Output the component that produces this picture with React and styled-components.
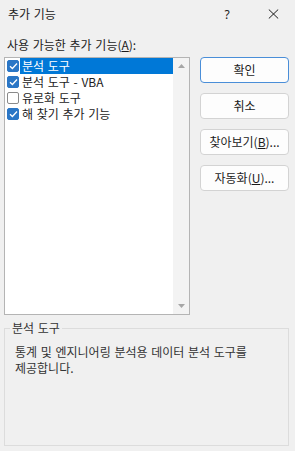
import React from 'react';
import styled, { createGlobalStyle } from 'styled-components';

const Global = createGlobalStyle`
  html, body { margin: 0; padding: 0; background: #f0f0f0; }
  body {
    font-family: "Noto Sans CJK KR", "Noto Sans", sans-serif;
    font-size: 12px;
    word-spacing: 1px;
    color: #1b1b1b;
  }
`;

const Window = styled.div`
  width: 295px;
  height: 451px;
  box-sizing: border-box;
  display: flex;
  flex-direction: column;
  background: #f0f0f0;
  overflow: hidden;
`;

const TitleBar = styled.div`
  height: 28px;
  flex: none;
  display: flex;
  align-items: center;
  padding: 0 7px 0 8px;
`;

const Title = styled.div`
  flex: 1;
  font-size: 12px;
  line-height: 16px;
  color: #1a1a1a;
`;

const TitleButton = styled.div`
  width: 30px;
  height: 20px;
  display: flex;
  align-items: center;
  justify-content: center;
  margin-left: ${p => p.$gap || 0}px;
  color: #1a1a1a;
  font-size: 12px;
  font-family: "Noto Sans", sans-serif;
`;

const Body = styled.div`
  flex: 1;
  display: flex;
  flex-direction: column;
  padding: 0 6px 5px 4px;
  min-height: 0;
`;

const FieldLabel = styled.div`
  margin: 9px 0 4px 3px;
  line-height: 16px;
  color: #1b1b1b;
`;

const MainRow = styled.div`
  display: flex;
  gap: 10px;
  align-items: flex-start;
`;

const ListBox = styled.div`
  width: 186px;
  height: 258px;
  box-sizing: border-box;
  border: 1px solid #b4b4b4;
  background: #ffffff;
  display: flex;
`;

const Items = styled.div`
  flex: 1;
  display: flex;
  flex-direction: column;
`;

const Row = styled.div`
  height: 16px;
  display: flex;
  align-items: center;
`;

const Check = styled.span`
  width: 12px;
  height: 12px;
  box-sizing: border-box;
  margin: 0 1px 0 2px;
  border-radius: 2px;
  display: flex;
  align-items: center;
  justify-content: center;
  background: ${p => (p.$checked ? '#2a76c6' : '#ffffff')};
  border: 1px solid ${p => (p.$checked ? '#2a76c6' : '#8a8a8a')};
  flex: none;
`;

const ItemText = styled.span`
  flex: 1;
  height: 16px;
  line-height: 16px;
  padding-left: 2px;
  background: ${p => (p.$selected ? '#0078d7' : 'transparent')};
  color: ${p => (p.$selected ? '#ffffff' : '#1b1b1b')};
  white-space: nowrap;
`;

const ScrollBar = styled.div`
  width: 16px;
  flex: none;
  background: #f3f3f3;
  display: flex;
  flex-direction: column;
  justify-content: space-between;
`;

const Arrow = styled.div`
  height: 16px;
  display: flex;
  align-items: center;
  justify-content: center;
`;

const Buttons = styled.div`
  display: flex;
  flex-direction: column;
  gap: 10px;
`;

const Button = styled.button`
  width: 89px;
  height: 26px;
  box-sizing: border-box;
  padding: 0;
  border-radius: 4px;
  background: #fdfdfd;
  border: 1px solid ${p => (p.$default ? '#4a8ed8' : '#d3d3d3')};
  font-family: "Noto Sans CJK KR", "Noto Sans", sans-serif;
  font-size: 12px;
  color: #1b1b1b;
  line-height: 16px;
  white-space: nowrap;
`;

const Group = styled.fieldset`
  flex: 1;
  margin: 5px 0 0 0;
  padding: 0 5px;
  border: 1px solid #dcdcdc;
  min-width: 0;
`;

const Legend = styled.legend`
  padding: 0 2px;
  line-height: 16px;
  color: #333333;
`;

const Desc = styled.div`
  margin: 8px 0 0 5px;
  line-height: 16px;
  color: #333333;
`;

const CheckMark = () => (
  <svg width="9" height="8" viewBox="0 0 9 8">
    <path d="M1 4.2 L3.4 6.5 L8 1.5" fill="none" stroke="#fff" strokeWidth="1.3" />
  </svg>
);

const items = [
  { label: '분석 도구', checked: true, selected: true },
  { label: '분석 도구 - VBA', checked: true },
  { label: '유로화 도구', checked: false },
  { label: '해 찾기 추가 기능', checked: true },
];

export default function App() {
  return (
    <Window>
      <Global />
      <TitleBar>
        <Title>추가 기능</Title>
        <TitleButton>?</TitleButton>
        <TitleButton $gap={16}>
          <svg width="11" height="10" viewBox="0 0 11 10">
            <path d="M0.8 0.5 L10.2 9.5 M10.2 0.5 L0.8 9.5" stroke="#1a1a1a" strokeWidth="1" />
          </svg>
        </TitleButton>
      </TitleBar>
      <Body>
        <FieldLabel>사용 가능한 추가 기능(<u>A</u>):</FieldLabel>
        <MainRow>
          <ListBox>
            <Items>
              {items.map(it => (
                <Row key={it.label}>
                  <Check $checked={it.checked}>{it.checked && <CheckMark />}</Check>
                  <ItemText $selected={it.selected}>{it.label}</ItemText>
                </Row>
              ))}
            </Items>
            <ScrollBar>
              <Arrow>
                <svg width="7" height="4" viewBox="0 0 7 4"><path d="M0 4 L3.5 0 L7 4 Z" fill="#a6a6a6" /></svg>
              </Arrow>
              <Arrow>
                <svg width="7" height="4" viewBox="0 0 7 4"><path d="M0 0 L3.5 4 L7 0 Z" fill="#a6a6a6" /></svg>
              </Arrow>
            </ScrollBar>
          </ListBox>
          <Buttons>
            <Button $default>확인</Button>
            <Button>취소</Button>
            <Button>찾아보기(<u>B</u>)...</Button>
            <Button>자동화(<u>U</u>)...</Button>
          </Buttons>
        </MainRow>
        <Group>
          <Legend>분석 도구</Legend>
          <Desc>
            통계 및 엔지니어링 분석용 데이터 분석 도구를
            <br />
            제공합니다.
          </Desc>
        </Group>
      </Body>
    </Window>
  );
}
